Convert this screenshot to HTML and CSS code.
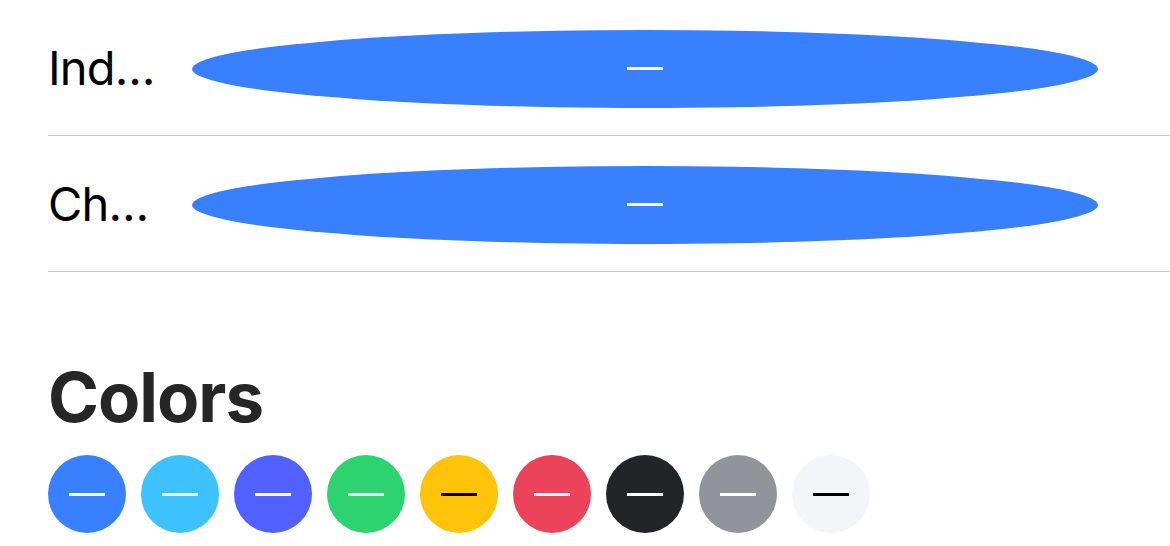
FILE: index.html
```html
<!DOCTYPE html>
<html>
<head>
<meta charset="utf-8">
<link rel="stylesheet" href="styles.css">
</head>
<body>
<div class="page">
  <div class="list">
    <div class="row">
      <div class="label">Ind…</div>
      <div class="pill"><span class="dash"></span></div>
    </div>
    <div class="row">
      <div class="label">Ch…</div>
      <div class="pill"><span class="dash"></span></div>
    </div>
  </div>
  <h2 class="title">Colors</h2>
  <div class="swatches">
    <div class="dot primary"><span class="dash"></span></div>
    <div class="dot secondary"><span class="dash"></span></div>
    <div class="dot tertiary"><span class="dash"></span></div>
    <div class="dot success"><span class="dash"></span></div>
    <div class="dot warning"><span class="dash dark-dash"></span></div>
    <div class="dot danger"><span class="dash"></span></div>
    <div class="dot dark"><span class="dash"></span></div>
    <div class="dot medium"><span class="dash"></span></div>
    <div class="dot light"><span class="dash dark-dash"></span></div>
  </div>
</div>
</body>
</html>
```

FILE: styles.css
```css
html, body {
  margin: 0;
  padding: 0;
  background: #fff;
}
body {
  font-family: Inter, "Liberation Sans", sans-serif;
  width: 1170px;
  height: 546px;
  overflow: hidden;
}
.page {
  padding-left: 48px;
}
.row {
  display: flex;
  align-items: center;
  height: 135px;
  border-bottom: 1px solid #c8c7cc;
}
.label {
  width: 144px;
  font-size: 47px;
  line-height: 1;
  color: #000;
  white-space: nowrap;
  letter-spacing: -0.8px;
}
.pill {
  width: 906px;
  height: 78px;
  margin-top: 2px;
  border-radius: 50%;
  background: #3880ff;
  display: flex;
  align-items: center;
  justify-content: center;
}
.dash {
  display: block;
  width: 36px;
  height: 3px;
  background: #fff;
}
.dash.dark-dash {
  background: #000;
}
.title {
  margin: 90px 0 0 0;
  font-size: 69px;
  line-height: 70px;
  font-weight: 700;
  color: #262626;
  letter-spacing: -1px;
}
.swatches {
  display: flex;
  gap: 15px;
  margin-top: 23px;
}
.dot {
  width: 78px;
  height: 78px;
  border-radius: 50%;
  display: flex;
  align-items: center;
  justify-content: center;
}
.primary { background: #3880ff; }
.secondary { background: #3dc2ff; }
.tertiary { background: #5260ff; }
.success { background: #2dd36f; }
.warning { background: #ffc409; }
.danger { background: #eb445a; }
.dark { background: #222428; }
.medium { background: #92949c; }
.light { background: #f4f5f8; }
```
